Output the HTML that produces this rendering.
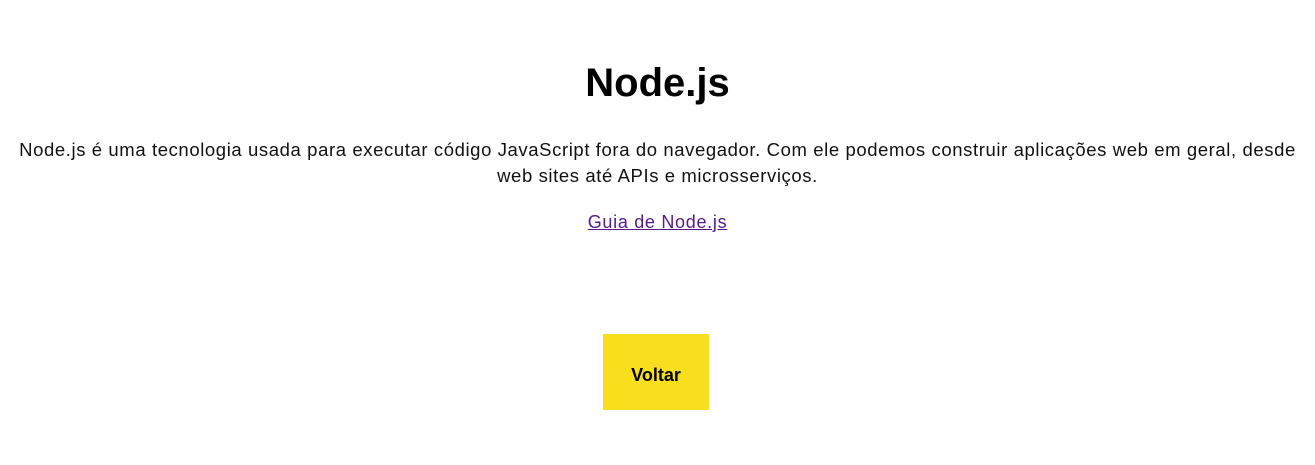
<!DOCTYPE html>
<html><head><meta charset="utf-8"><style>
html,body{margin:0;padding:0;background:#fff;}
body{width:1315px;height:465px;font-family:"Liberation Sans",sans-serif;color:#111;text-align:center;position:relative;overflow:hidden;}
h1{position:absolute;top:57px;left:0;width:1315px;margin:0;font-size:40px;font-weight:bold;line-height:52px;color:#000;}
p.d{position:absolute;top:137px;left:0;width:1315px;margin:0;font-size:18.5px;letter-spacing:0.6px;line-height:26px;white-space:nowrap;}
a{position:absolute;top:209px;left:0;width:1315px;font-size:18px;letter-spacing:0.7px;line-height:26px;color:#551a8b;}
a span{text-decoration:underline;}
.btn{position:absolute;left:603px;top:334px;width:106px;height:76px;background:#f7df1e;font-weight:bold;font-size:18px;line-height:82px;color:#000;}
</style></head><body>
<h1>Node.js</h1>
<p class="d">Node.js é uma tecnologia usada para executar código JavaScript fora do navegador. Com ele podemos construir aplicações web em geral, desde<br>web sites até APIs e microsserviços.</p>
<a><span>Guia de Node.js</span></a>
<div class="btn">Voltar</div>
</body></html>
